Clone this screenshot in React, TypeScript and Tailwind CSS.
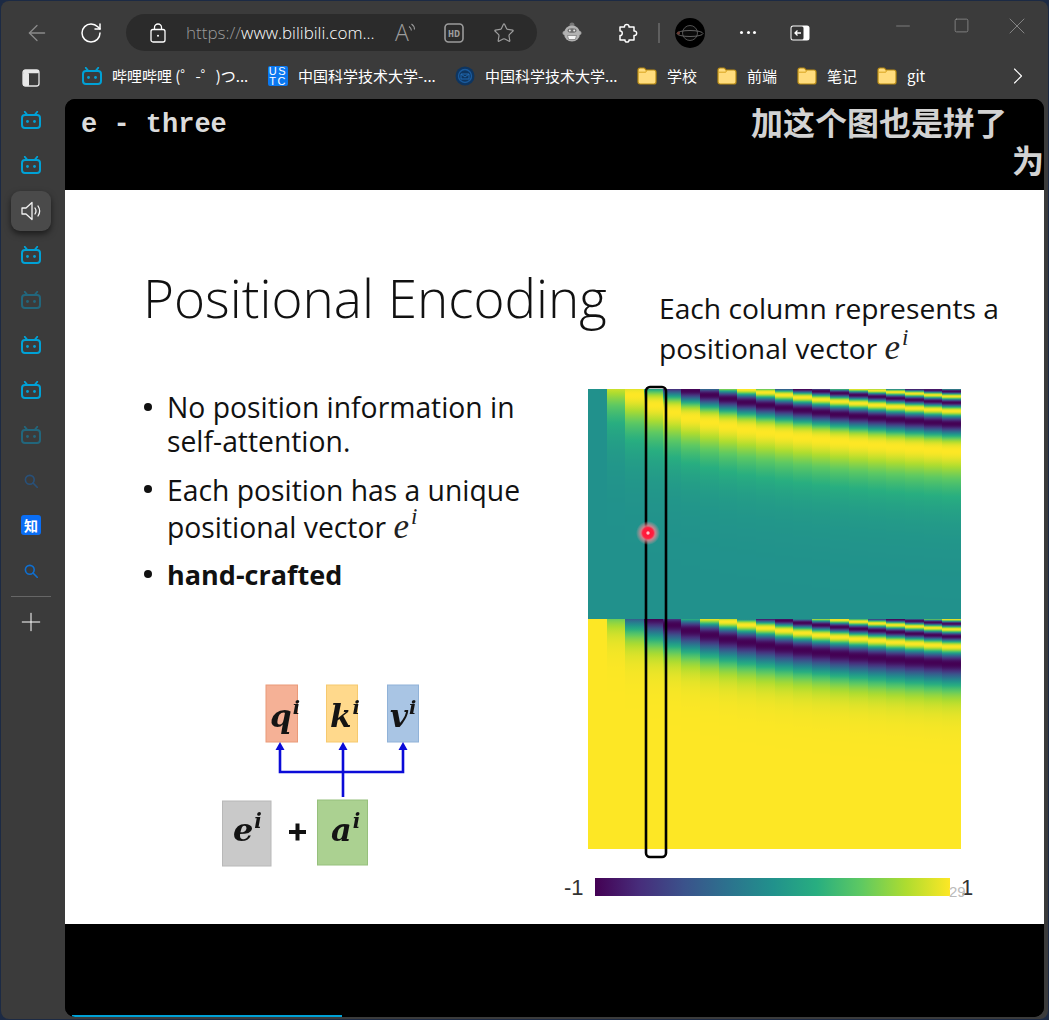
import React from 'react';
import { ArrowLeft, RotateCw, Star, Plus, ChevronRight, Minus, Square, X } from 'lucide-react';

const VIRIDIS: [number, number, number][] = [
  [68, 1, 84], [71, 45, 123], [59, 82, 139], [44, 114, 142], [33, 145, 140],
  [40, 174, 128], [94, 201, 98], [173, 220, 48], [253, 231, 37],
];

function colorFor(v: number): string {
  const t = Math.max(0, Math.min(1, (v + 1) / 2)) * (VIRIDIS.length - 1);
  const i = Math.min(VIRIDIS.length - 2, Math.floor(t));
  const f = t - i;
  const c = VIRIDIS[i].map((a, k) => Math.round(a + (VIRIDIS[i + 1][k] - a) * f));
  return `rgb(${c[0]},${c[1]},${c[2]})`;
}

const COLS = Array.from({ length: 20 }, (_, c) => c);
const STOPS = Array.from({ length: 231 }, (_, r) => r / 230);

function Bili({ faded = false }: { faded?: boolean }) {
  return (
    <svg width="20" height="18" viewBox="0 0 20 18" fill="none" stroke="#00a1d6" opacity={faded ? 0.42 : 1} className="shrink-0">
      <rect x="1" y="4" width="18" height="13" rx="3" strokeWidth="2" />
      <path d="M6.5 4 3.8 .8M13.5 4 16.2 .8" strokeWidth="1.8" strokeLinecap="round" />
      <circle cx="6.5" cy="10.5" r="1.4" fill="#00a1d6" stroke="none" />
      <circle cx="13.5" cy="10.5" r="1.4" fill="#00a1d6" stroke="none" />
    </svg>
  );
}

function SideBili({ faded = false }: { faded?: boolean }) {
  return (
    <div className="-translate-y-[1px]">
      <Bili faded={faded} />
    </div>
  );
}

function SearchIcon({ faded = false }: { faded?: boolean }) {
  return (
    <svg width="14" height="14" viewBox="0 0 14 14" fill="none" stroke="#0f6fd0" strokeWidth="1.6" opacity={faded ? 0.42 : 1}>
      <circle cx="5.8" cy="5.8" r="4.4" />
      <path d="M9 9l4.2 4.2" strokeLinecap="round" />
    </svg>
  );
}

function Folder() {
  return (
    <svg width="20" height="18" viewBox="0 0 20 18" className="shrink-0">
      <path d="M1 3.2C1 2 1.8 1 3 1h3.6c.8 0 1.3.4 1.8 1.2l.4.8H17c1.2 0 2 .9 2 2v10c0 1.2-.8 2-2 2H3c-1.2 0-2-.8-2-2z" fill="#ffdc7d" stroke="#b88a12" strokeWidth="1.2" />
      <path d="M1.6 5.2h7.2l1-2" fill="none" stroke="#d9a520" strokeWidth="1" />
    </svg>
  );
}

function Bookmark({ icon, label, width }: { icon: React.ReactNode; label: string; width: string }) {
  return (
    <div className={`flex items-center gap-[10px] shrink-0 ${width}`}>
      <div className="w-[20px] h-[20px] flex items-center justify-center shrink-0">{icon}</div>
      <span className="text-[15px] text-white font-['Noto_Sans_CJK_SC','Noto_Sans',sans-serif] whitespace-nowrap leading-none">{label}</span>
    </div>
  );
}

function SideItem({ children }: { children: React.ReactNode }) {
  return <div className="h-[45px] flex items-center justify-center">{children}</div>;
}

function Sup({ base }: { base: string }) {
  return (
    <span className="font-['Liberation_Serif',serif] italic text-[35px] leading-none text-[#222] whitespace-nowrap">
      {base}
      <sup className="text-[23px] leading-none align-baseline relative -top-[14px] ml-[2px]">i</sup>
    </span>
  );
}

function Bullet({ children, tight = false }: { children: React.ReactNode; tight?: boolean }) {
  return (
    <li className="flex">
      <span className="mt-[13px] ml-[1px] mr-[15px] w-[8px] h-[8px] rounded-full bg-[#111] shrink-0" />
      <div className={tight ? 'leading-[37px]' : 'leading-[34px]'}>{children}</div>
    </li>
  );
}

function MathLabel({ x, y, base, size }: { x: number; y: number; base: string; size: number }) {
  return (
    <text x={x} y={y} fontFamily="'DejaVu Serif', serif" fontWeight="700" fontStyle="italic" fontSize={size} fill="#141414">
      {base}
      <tspan dx="1" dy={-size * 0.42} fontSize={size * 0.62}>i</tspan>
    </text>
  );
}

function Diagram() {
  return (
    <svg width="210" height="190" viewBox="220 680 210 190" className="ml-[77px] mt-[88px] blur-[0.4px]">
      <rect x="266" y="685" width="31.5" height="57" fill="#f5b196" stroke="#ea9a78" />
      <rect x="326.5" y="685" width="31" height="57" fill="#ffd98c" stroke="#f6c96f" />
      <rect x="387.5" y="685" width="31" height="57" fill="#a9c5e4" stroke="#90b2d8" />
      <rect x="222.5" y="801" width="48.5" height="65" fill="#c9c9c9" stroke="#b8b8b8" />
      <rect x="317.5" y="800" width="50" height="65" fill="#abd191" stroke="#96c07c" />
      <path d="M280 749V772H403V749M343 749V797" fill="none" stroke="#0b0bd8" strokeWidth="2.6" />
      <path d="M280 742l-4.5 8h9zM343 742l-4.5 8h9zM403 742l-4.5 8h9z" fill="#0b0bd8" />
      <MathLabel x={270} y={727} base="q" size={31} />
      <MathLabel x={330} y={727} base="k" size={31} />
      <MathLabel x={390} y={727} base="v" size={31} />
      <MathLabel x={233} y={841} base="e" size={32} />
      <MathLabel x={331} y={841} base="a" size={32} />
      <path d="M289 832h17M297.5 823.5v17" stroke="#111" strokeWidth="4" />
    </svg>
  );
}

function Heatmap() {
  const edge = (c: number) => Math.round((c * 373) / 20);
  const bands = [
    { key: 'sin', fn: Math.sin, y: 4 },
    { key: 'cos', fn: Math.cos, y: 234 },
  ];
  return (
    <svg width="380" height="475" viewBox="0 0 380 475" className="mt-[17px] block overflow-visible">
      <defs>
        {bands.map((b) =>
          COLS.map((c) => (
            <linearGradient key={b.key + c} id={`${b.key}${c}`} x1="0" y1="0" x2="0" y2="1">
              {STOPS.map((s, i) => (
                <stop key={i} offset={s} stopColor={colorFor(b.fn(c / Math.pow(10000, s)))} />
              ))}
            </linearGradient>
          )),
        )}
        <radialGradient id="laser">
          <stop offset="0" stopColor="#ff1030" />
          <stop offset="0.45" stopColor="#ff2040" />
          <stop offset="0.6" stopColor="#f0808c" stopOpacity="0.8" />
          <stop offset="1" stopColor="#f0a0a8" stopOpacity="0" />
        </radialGradient>
      </defs>
      <g className="blur-[0.5px]">
        {bands.map((b) =>
          COLS.map((c) => (
            <rect
              key={b.key + c}
              x={edge(c)}
              y={b.y}
              width={edge(c + 1) - edge(c)}
              height={230}
              fill={`url(#${b.key}${c})`}
              shapeRendering="crispEdges"
            />
          )),
        )}
      </g>
      <rect x="58" y="2" width="20" height="470" rx="4" fill="none" stroke="#000" strokeWidth="2.6" />
      <circle cx="60" cy="148" r="12" fill="url(#laser)" />
      <circle cx="60" cy="148" r="1.7" fill="#ffc0c8" />
    </svg>
  );
}

export default function App() {
  return (
    <div className="w-[1049px] h-[1020px] p-[1px] bg-[#1c2a44] overflow-hidden">
      <div className="w-full h-full bg-[#3b3b3b] rounded-[8px] flex flex-col overflow-hidden">
        {/* toolbar */}
        <div className="h-[63px] shrink-0 flex items-center pl-[23px]">
          <ArrowLeft size={26} strokeWidth={1.2} className="text-[#8a8a8a] shrink-0" />
          <RotateCw size={24} strokeWidth={1.5} className="text-white ml-[29px] shrink-0" />
          <div className="ml-[23px] w-[411px] h-[37px] shrink-0 rounded-full bg-[#2b2b2b] flex items-center pl-[24px]">
            <svg width="16" height="20" viewBox="0 0 16 20" fill="none" stroke="#fff" strokeWidth="1.3" className="shrink-0">
              <rect x="1" y="6.5" width="14" height="12.5" rx="2" />
              <path d="M4.5 6.5V4.5a3.5 3.5 0 0 1 7 0v2" />
              <circle cx="8" cy="12.8" r="1" fill="#fff" stroke="none" />
            </svg>
            <div className="ml-[20px] w-[194px] shrink-0 text-[17px] whitespace-nowrap font-['Open_Sans',sans-serif] font-light leading-none">
              <span className="text-[#9b9b9b]">https://</span>
              <span className="text-white">www.bilibili.com...</span>
            </div>
            <svg width="20" height="20" viewBox="0 0 20 20" className="ml-[15px] shrink-0 overflow-visible">
              <text x="0" y="18" fontFamily="'Open Sans', sans-serif" fontSize="23" fontWeight="300" fill="#9c9c9c">A</text>
              <path d="M14 3.500c1.500 1 2.300 2.400 2.400 4M16.500 1c2 1.300 3 3.300 3 5.500" fill="none" stroke="#9c9c9c" strokeWidth="1.1" />
            </svg>
            <svg width="20" height="20" viewBox="0 0 20 20" className="ml-[29px] shrink-0">
              <rect x="1" y="1" width="18" height="18" rx="3.5" fill="none" stroke="#9c9c9c" strokeWidth="1.6" />
              <text x="10" y="14" textAnchor="middle" fontFamily="'Liberation Mono', monospace" fontWeight="700" fontSize="10" fill="#9c9c9c">HD</text>
            </svg>
            <Star size={22} strokeWidth={1.3} className="text-[#9c9c9c] ml-[29px] shrink-0" />
          </div>
          <svg width="20" height="22" viewBox="0 0 20 22" className="ml-[25px] shrink-0">
            <circle cx="10" cy="3" r="2.5" fill="#777" />
            <circle cx="2.500" cy="11" r="2" fill="#a8a8a8" />
            <circle cx="17.500" cy="11" r="2" fill="#a8a8a8" />
            <circle cx="10" cy="11.500" r="8" fill="#b2b2b2" />
            <ellipse cx="10" cy="8.500" rx="4.500" ry="2.300" fill="#6e6e6e" />
            <circle cx="7.800" cy="8.500" r="1" fill="#e8e8e8" />
            <circle cx="12.200" cy="8.500" r="1" fill="#e8e8e8" />
            <path d="M5.500 13.500h9l-1.200 4H6.700z" fill="#f4f4f4" stroke="#666" strokeWidth=".6" />
          </svg>
          <svg width="22" height="22" viewBox="0 0 22 22" fill="none" stroke="#fff" strokeWidth="1.5" strokeLinejoin="round" className="ml-[34px] shrink-0">
            <path d="M4 5H8.500C8 1.500 13.500 1.500 13 5H18V9C21.500 8.500 21.500 14 18 13.500V18H13C13.500 20.800 8.500 20.800 9 18H4V13.500C7 14 7 8.500 4 9Z" />
          </svg>
          <div className="ml-[20px] w-[2px] h-[20px] bg-[#5f5f5f] shrink-0" />
          <svg width="30" height="30" viewBox="0 0 30 30" className="ml-[15px] shrink-0">
            <circle cx="15" cy="15" r="15" fill="#000" />
            <circle cx="15" cy="15" r="7.500" fill="#0a0a0a" stroke="#5a5a5a" strokeWidth=".9" />
            <ellipse cx="15" cy="15.500" rx="13" ry="3" fill="none" stroke="#6a6a6a" strokeWidth=".9" />
            <circle cx="3.500" cy="15" r="1.600" fill="#6a3a32" />
          </svg>
          <div className="ml-[35px] w-[16px] flex justify-between shrink-0">
            <span className="w-[3px] h-[3px] rounded-full bg-white" />
            <span className="w-[3px] h-[3px] rounded-full bg-white" />
            <span className="w-[3px] h-[3px] rounded-full bg-white" />
          </div>
          <svg width="20" height="16" viewBox="0 0 20 16" className="ml-[34px] shrink-0">
            <rect x="0.500" y="0.500" width="19" height="15" rx="2.500" fill="#fff" />
            <rect x="1.500" y="1.500" width="12" height="13" rx="1.500" fill="#333" />
            <path d="M11 8H5M7.500 5.500 5 8l2.500 2.500" fill="none" stroke="#fff" strokeWidth="1.3" />
          </svg>
          <div className="ml-[82px] -mt-[14px] flex items-center shrink-0 text-[#8a8a8a]">
            <Minus size={22} strokeWidth={0.9} className="shrink-0" />
            <Square size={17} strokeWidth={1.2} className="ml-[39px] shrink-0" />
            <X size={28} strokeWidth={0.8} className="ml-[33px] shrink-0" />
          </div>
        </div>

        {/* body */}
        <div className="flex-1 flex min-h-0">
          {/* sidebar */}
          <div className="w-[64px] shrink-0 flex flex-col items-center pr-[4px]">
            <div className="h-[28px] mb-[6px] flex items-center justify-center">
              <svg width="18" height="18" viewBox="0 0 18 18">
                <rect x="1" y="1" width="16" height="16" rx="2.500" fill="none" stroke="#e8e8e8" strokeWidth="1.3" />
                <rect x="1" y="1" width="16" height="3.200" rx="1.500" fill="#e8e8e8" />
                <rect x="1" y="4" width="6" height="13" rx="1" fill="#e8e8e8" />
              </svg>
            </div>
            <SideItem><SideBili /></SideItem>
            <SideItem><SideBili /></SideItem>
            <SideItem>
              <div className="w-[40px] h-[40px] rounded-[9px] bg-[#4a4a4a] shadow-[0_3px_6px_rgba(0,0,0,0.55)] flex items-center justify-center">
                <svg width="22" height="22" viewBox="0 0 22 22" fill="none" stroke="#f2f2f2" strokeWidth="1.3" strokeLinejoin="round">
                  <path d="M2 8h4l6-5.500v17L6 14H2z" />
                  <path d="M15 8c1.200 1.800 1.200 4.200 0 6M18 6c2 3 2 7 0 10" strokeLinecap="round" />
                </svg>
              </div>
            </SideItem>
            <SideItem><SideBili /></SideItem>
            <SideItem><SideBili faded /></SideItem>
            <SideItem><SideBili /></SideItem>
            <SideItem><SideBili /></SideItem>
            <SideItem><SideBili faded /></SideItem>
            <SideItem><SearchIcon faded /></SideItem>
            <SideItem>
              <div className="w-[20px] h-[20px] -translate-y-[1px] rounded-[3px] bg-[#0a6ef5] flex items-center justify-center text-[14px] font-bold text-white font-['Noto_Sans_CJK_SC',sans-serif] leading-none">知</div>
            </SideItem>
            <SideItem><SearchIcon /></SideItem>
            <div className="w-[40px] h-[1px] bg-[#666] mt-[3px] shrink-0" />
            <Plus size={30} strokeWidth={0.8} className="text-white mt-[10px] shrink-0" />
          </div>

          {/* right */}
          <div className="flex-1 min-w-0 flex flex-col pr-[4px] pb-[2px]">
            <div className="h-[35px] shrink-0 flex items-center pl-[17px] relative -top-[6px]">
              <Bookmark width="w-[186px]" label="哔哩哔哩 (゜-゜)つ..." icon={<Bili />} />
              <Bookmark
                width="w-[187px]"
                label="中国科学技术大学-..."
                icon={
                  <div className="w-[20px] h-[20px] rounded-[2px] bg-[#0a78f0] text-white font-['Liberation_Sans',sans-serif] text-[11px] leading-[10px] text-center tracking-[1.5px]">
                    US<br />TC
                  </div>
                }
              />
              <Bookmark
                width="w-[182px]"
                label="中国科学技术大学..."
                icon={
                  <svg width="20" height="20" viewBox="0 0 20 20">
                    <circle cx="10" cy="10" r="9.500" fill="#0e3560" />
                    <circle cx="10" cy="10" r="6.500" fill="none" stroke="#1a5a9c" strokeWidth="1.400" />
                    <path d="M6 8h8v5H6zM6 8l4 3 4-3" fill="none" stroke="#2069b0" strokeWidth="1" />
                  </svg>
                }
              />
              <Bookmark width="w-[80px]" label="学校" icon={<Folder />} />
              <Bookmark width="w-[80px]" label="前端" icon={<Folder />} />
              <Bookmark width="w-[80px]" label="笔记" icon={<Folder />} />
              <Bookmark width="w-[127px]" label="git" icon={<Folder />} />
              <ChevronRight size={28} strokeWidth={1} className="text-white shrink-0" />
            </div>

            {/* video */}
            <div className="flex-1 min-h-0 relative rounded-[10px] overflow-hidden bg-black flex flex-col">
              <div className="h-[91px] shrink-0 bg-black pl-[16px] pt-[9px] font-['Liberation_Mono',monospace] font-bold text-[27px] leading-[34px] text-[#dcdcdc]">
                e - three
              </div>
              <div className="h-[734px] shrink-0 bg-white flex text-[#111] font-['Open_Sans',sans-serif]">
                <div className="w-[523px] shrink-0 pl-[78px] pt-[78px]">
                  <h1 className="text-[53px] leading-[60px] font-light whitespace-nowrap">Positional Encoding</h1>
                  <ul className="mt-[62px] text-[28.3px] flex flex-col whitespace-nowrap">
                    <Bullet>No position information in<br />self-attention.</Bullet>
                    <div className="h-[14px]" />
                    <Bullet tight>
                      Each position has a unique<br />
                      positional vector <Sup base="e" />
                    </Bullet>
                    <div className="h-[11px]" />
                    <Bullet><b className="text-[27px]">hand-crafted</b></Bullet>
                  </ul>
                  <Diagram />
                </div>
                <div className="flex-1 min-w-0 pt-[98px]">
                  <div className="pl-[71px] text-[28.2px] leading-[40px] whitespace-nowrap">
                    Each column represents a<br />
                    positional vector <Sup base="e" />
                  </div>
                  <Heatmap />
                  <div className="mt-[18px] -ml-[24px] h-[18px] flex items-center relative text-[22px] text-[#333] font-['Liberation_Sans',sans-serif]">
                    <span className="w-[20px] shrink-0">-1</span>
                    <div className="ml-[11px] w-[355px] h-[18px] shrink-0 bg-[linear-gradient(to_right,#440154,#472d7b,#3b528b,#2c728e,#21918c,#28ae80,#5ec962,#addc30,#fde725)]" />
                    <span className="ml-[11px]">1</span>
                    <span className="absolute left-[385px] top-[3px] text-[15px] text-[#bbb]">29</span>
                  </div>
                </div>
              </div>
              <div className="flex-1 bg-black relative">
                <div className="absolute bottom-0 left-[7px] w-[270px] h-[2px] bg-[#00a1d6]" />
              </div>
              <div className="absolute left-[686px] top-[4px] text-[32px] leading-[36px] font-bold text-[#d2d2d2] font-['Noto_Sans_CJK_SC',sans-serif] whitespace-nowrap">加这个图也是拼了</div>
              <div className="absolute left-[947px] top-[42px] text-[32px] leading-[36px] font-bold text-[#d2d2d2] font-['Noto_Sans_CJK_SC',sans-serif] whitespace-nowrap">为</div>
            </div>
          </div>
        </div>
      </div>
    </div>
  );
}
